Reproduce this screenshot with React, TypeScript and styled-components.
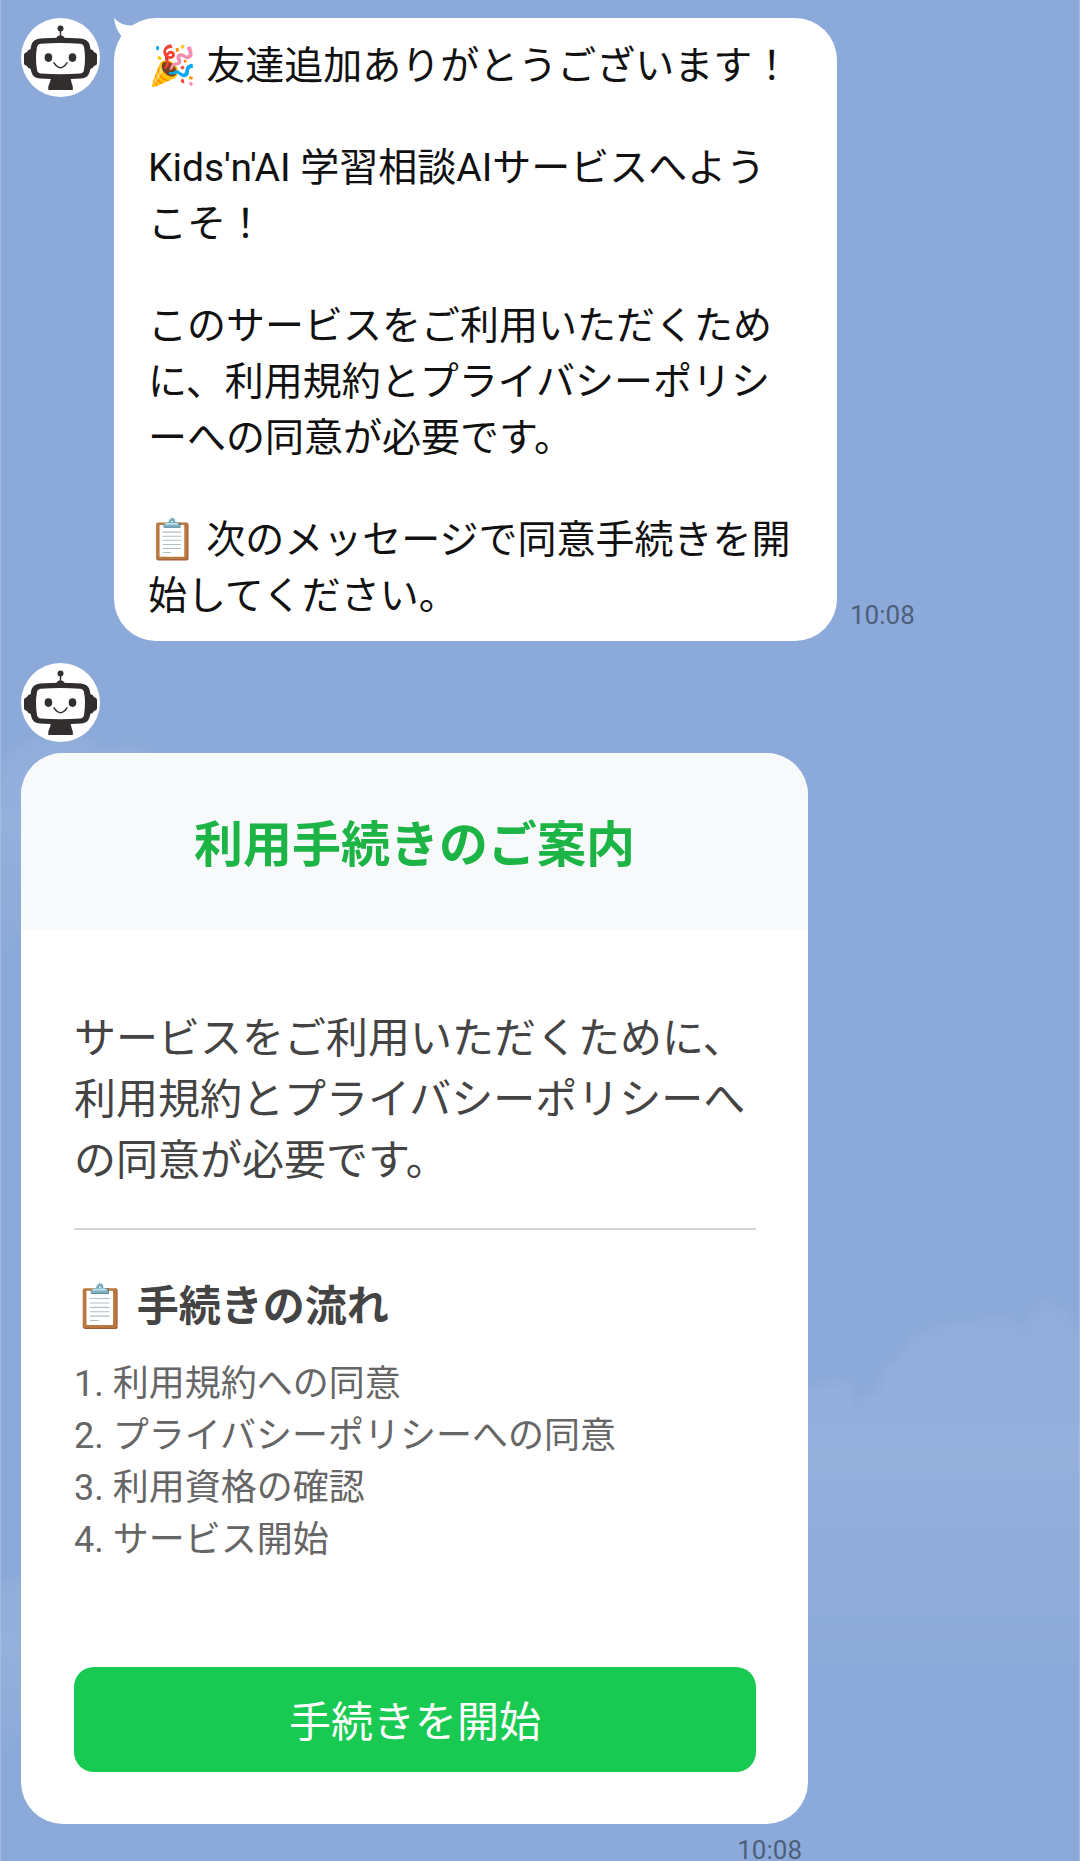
import React from 'react';
import styled, { createGlobalStyle } from 'styled-components';

const GlobalStyle = createGlobalStyle`
  *, *::before, *::after { box-sizing: border-box; }
  body {
    margin: 0;
    background: #8caad9;
    font-family: Roboto, "Noto Sans CJK JP", "Noto Color Emoji", sans-serif;
  }
  p, h2, h3, ol { margin: 0; padding: 0; }
`;

const Chat = styled.main`
  position: relative;
  display: flex;
  flex-direction: column;
  gap: 22px;
  min-height: 100vh;
  padding: 18px 20px 0;
  border: solid #a3bbe1;
  border-width: 0 1px;
`;

const Sky = styled.svg`
  position: absolute;
  inset: 0;
  width: 100%;
  height: 100%;
`;

const Message = styled.article<{ $stacked?: boolean }>`
  position: relative;
  display: flex;
  flex-direction: ${(p) => (p.$stacked ? 'column' : 'row')};
  align-items: flex-start;
  gap: ${(p) => (p.$stacked ? '11px' : '14px')};
`;

const AvatarSvg = styled.svg`
  display: block;
  flex: none;
  width: 79px;
  height: 79px;
`;

const BubbleRow = styled.div`
  display: flex;
  align-items: flex-end;
  gap: 13px;
  min-width: 0;
`;

const Bubble = styled.div`
  position: relative;
  max-width: 723px;
  padding: 20px 42px 17px 34px;
  border-radius: 42px;
  background: #fff;
  color: #111;
  font-size: 39px;
  line-height: 56px;
  line-break: anywhere;
`;

const Tail = styled.svg`
  position: absolute;
  top: 0;
  left: 0;
  width: 42px;
  height: 42px;
`;

const Paragraph = styled.p`
  & + & { margin-top: 46px; }
`;

const Time = styled.time<{ $inset?: boolean }>`
  color: #4e5f7b;
  font-size: 26px;
  line-height: 22px;
  padding: ${(p) => (p.$inset ? '0 6px 0 0' : '0 0 15px')};
`;

const CardColumn = styled.div`
  display: flex;
  flex-direction: column;
  align-items: flex-end;
  gap: 15px;
  width: 787px;
  max-width: 100%;
`;

const Card = styled.section`
  width: 100%;
  border-radius: 42px;
  overflow: hidden;
  background: #fff;
`;

const CardHeader = styled.header`
  padding: 57px 53px 49px;
  background: #f8f9fb;
`;

const CardTitle = styled.h2`
  color: #1db446;
  font-size: 49px;
  line-height: 71px;
  font-weight: 700;
  text-align: center;
`;

const CardBody = styled.div`
  padding: 78px 52px 52px 53px;
`;

const Lead = styled.p`
  color: #444;
  font-size: 42px;
  line-height: 61px;
  line-break: anywhere;
`;

const Divider = styled.hr`
  height: 2px;
  margin: 37px 0 46px;
  border: 0;
  background: #d4d6da;
`;

const StepsTitle = styled.h3`
  color: #444;
  font-size: 42px;
  line-height: 61px;
  font-weight: 700;
`;

const Steps = styled.ol`
  margin: 21px 0 101px;
  list-style: none;
  color: #666;
  font-size: 36px;
  line-height: 52px;
`;

const StartButton = styled.button`
  display: block;
  width: 100%;
  height: 105px;
  padding: 0 0 2px;
  border: 0;
  border-radius: 20px;
  background: #19ca52;
  color: #fff;
  font: inherit;
  font-size: 42px;
  cursor: pointer;
`;

const steps = ['利用規約への同意', 'プライバシーポリシーへの同意', '利用資格の確認', 'サービス開始'];

function Avatar() {
  return (
    <AvatarSvg viewBox="0 0 79 79" role="img" aria-label="Kids'n'AI">
      <circle cx="39.5" cy="39.5" r="39.5" fill="#fff" />
      <g fill="#332e2e">
        <circle cx="39.5" cy="10.5" r="3" />
        <path d="M38.8 12h1.4v5.6c2 .3 3.2 1.2 3.4 2.7h-8.2c.2-1.5 1.4-2.4 3.4-2.7z" />
        <path d="M19 20.6Q39.500 19 60 20.600Q67 21.200 68.800 27.500L69.500 31.200Q72 31.200 73 34Q76 35 76 36.500V45.500Q76 47 73 48Q72 50.800 69.500 50.800L68.600 54Q67 60 60 60.500Q39.500 62 19 60.500Q12 60 10.400 54L9.500 50.800Q7 50.800 6 48Q3 47 3 45.500V36.500Q3 35 6 34Q7 31.200 9.500 31.200L10.200 27.500Q12 21.200 19 20.600z" />
        <path d="M30 60h19.500q1.200 6 2.300 8.500v3.500H27.300v-3.500q1.900-4 2.700-8.500z" />
      </g>
      <path d="M20 25.800Q39.500 24.400 59 25.800Q62.300 26 63 29Q65 40 63 52Q62.300 55.200 59 55.500Q39.500 57 20 55.500Q16.700 55.200 16 52Q14 40 16 29Q16.700 26 20 25.800z" fill="#fff" />
      <g fill="#332e2e">
        <ellipse cx="27.400" cy="39.600" rx="3.800" ry="4.300" />
        <ellipse cx="51.500" cy="39.600" rx="3.800" ry="4.300" />
      </g>
      <path d="M33 44.900q6.500 9.600 13 0" fill="none" stroke="#332e2e" strokeWidth="1.600" strokeLinecap="round" />
    </AvatarSvg>
  );
}

function Clouds() {
  return (
    <Sky viewBox="0 0 1080 1861" preserveAspectRatio="none" aria-hidden="true">
      <defs>
        <linearGradient id="cloud" x1="0" y1="0" x2="0" y2="1">
          <stop offset="0" stopColor="#fff" stopOpacity="0.05" />
          <stop offset="0.35" stopColor="#fff" stopOpacity="0.07" />
          <stop offset="0.85" stopColor="#fff" stopOpacity="0" />
        </linearGradient>
        <filter id="soft" x="-10%" y="-10%" width="120%" height="120%">
          <feGaussianBlur stdDeviation="4" />
        </filter>
      </defs>
      <g fill="url(#cloud)" filter="url(#soft)">
        <path d="M780 1402Q800 1392 822 1385Q845 1375 854 1390L858 1410Q866 1391 880 1391Q880 1364 900 1361Q910 1339 925 1333Q948 1321 973 1324Q1000 1314 1020 1325L1030 1334Q1028 1309 1045 1304Q1062 1304 1072 1320L1095 1352V1752H780z" />
        <path d="M-10 790Q6 752 30 742Q60 725 88 742Q100 756 120 750Q135 742 150 758V1000H-10z" />
        <path d="M-10 1588L30 1578V1790H-10z" />
      </g>
    </Sky>
  );
}

export default function App() {
  return (
    <>
      <GlobalStyle />
      <Chat>
        <Clouds />
        <Message>
          <Avatar />
          <BubbleRow>
            <Bubble>
              <Tail viewBox="0 0 42 42" aria-hidden="true">
                <path d="M0 0Q7 8 19 7.500L42 20V42H20L7.500 18.500Q1 10 0 0z" fill="#fff" />
              </Tail>
              <Paragraph>🎉 友達追加ありがとうございます！</Paragraph>
              <Paragraph>Kids'n'AI 学習相談AIサービスへようこそ！</Paragraph>
              <Paragraph>
                このサービスをご利用いただくために、利用規約とプライバシーポリシーへの同意が必要です。
              </Paragraph>
              <Paragraph>📋 次のメッセージで同意手続きを開始してください。</Paragraph>
            </Bubble>
            <Time>10:08</Time>
          </BubbleRow>
        </Message>
        <Message $stacked>
          <Avatar />
          <CardColumn>
            <Card>
              <CardHeader>
                <CardTitle>利用手続きのご案内</CardTitle>
              </CardHeader>
              <CardBody>
                <Lead>
                  サービスをご利用いただくために、利用規約とプライバシーポリシーへの同意が必要です。
                </Lead>
                <Divider />
                <StepsTitle>📋 手続きの流れ</StepsTitle>
                <Steps>
                  {steps.map((step, i) => (
                    <li key={step}>
                      {i + 1}. {step}
                    </li>
                  ))}
                </Steps>
                <StartButton type="button">手続きを開始</StartButton>
              </CardBody>
            </Card>
            <Time $inset>10:08</Time>
          </CardColumn>
        </Message>
      </Chat>
    </>
  );
}
